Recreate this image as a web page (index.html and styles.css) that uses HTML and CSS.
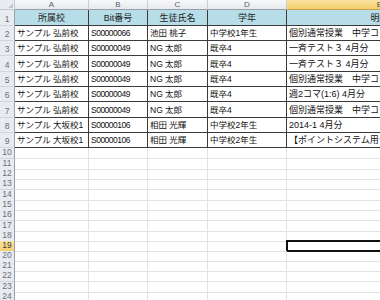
FILE: index.html
```html
<!DOCTYPE html>
<html lang="ja">
<head>
<meta charset="utf-8">
<link rel="stylesheet" href="styles.css">
</head>
<body>
<div class="sheet">
  <div class="row colhead">
    <div class="corner"><span class="tri"></span></div>
    <div class="ch">A</div><div class="ch">B</div><div class="ch">C</div><div class="ch">D</div><div class="ch sel">E</div>
  </div>
  <div class="row r1 h16">
    <div class="rh">1</div>
    <div class="c t hd">所属校</div><div class="c t hd">Bit番号</div><div class="c t hd">生徒氏名</div><div class="c t hd">学年</div><div class="c t hd">明細</div>
  </div>
  <div class="row h15">
    <div class="rh">2</div>
    <div class="c t">サンプル 弘前校</div><div class="c t num">S00000066</div><div class="c t">池田 桃子</div><div class="c t">中学校1年生</div><div class="c t e">個別通常授業　中学コース（週1回）4月分</div>
  </div>
  <div class="row h15">
    <div class="rh">3</div>
    <div class="c t">サンプル 弘前校</div><div class="c t num">S00000049</div><div class="c t">NG 太郎</div><div class="c t">既卒4</div><div class="c t e">一斉テスト３ 4月分</div>
  </div>
  <div class="row h16">
    <div class="rh">4</div>
    <div class="c t">サンプル 弘前校</div><div class="c t num">S00000049</div><div class="c t">NG 太郎</div><div class="c t">既卒4</div><div class="c t e">一斉テスト３ 4月分</div>
  </div>
  <div class="row h15">
    <div class="rh">5</div>
    <div class="c t">サンプル 弘前校</div><div class="c t num">S00000049</div><div class="c t">NG 太郎</div><div class="c t">既卒4</div><div class="c t e">個別通常授業　中学コース（週1回）4月分</div>
  </div>
  <div class="row h15">
    <div class="rh">6</div>
    <div class="c t">サンプル 弘前校</div><div class="c t num">S00000049</div><div class="c t">NG 太郎</div><div class="c t">既卒4</div><div class="c t e">週2コマ(1:6) 4月分</div>
  </div>
  <div class="row h16">
    <div class="rh">7</div>
    <div class="c t">サンプル 弘前校</div><div class="c t num">S00000049</div><div class="c t">NG 太郎</div><div class="c t">既卒4</div><div class="c t e">個別通常授業　中学コース（週1回）4月分</div>
  </div>
  <div class="row h15">
    <div class="rh">8</div>
    <div class="c t">サンプル 大坂校1</div><div class="c t num">S00000106</div><div class="c t">相田 光輝</div><div class="c t">中学校2年生</div><div class="c t e">2014-1 4月分</div>
  </div>
  <div class="row h15">
    <div class="rh">9</div>
    <div class="c t">サンプル 大坂校1</div><div class="c t num">S00000106</div><div class="c t">相田 光輝</div><div class="c t">中学校2年生</div><div class="c t e">【ポイントシステム用テスト】4月分</div>
  </div>
  <div class="row h11"><div class="rh">10</div><div class="c"></div><div class="c"></div><div class="c"></div><div class="c"></div><div class="c"></div></div>
  <div class="row h10"><div class="rh">11</div><div class="c"></div><div class="c"></div><div class="c"></div><div class="c"></div><div class="c"></div></div>
  <div class="row h10"><div class="rh">12</div><div class="c"></div><div class="c"></div><div class="c"></div><div class="c"></div><div class="c"></div></div>
  <div class="row h11"><div class="rh">13</div><div class="c"></div><div class="c"></div><div class="c"></div><div class="c"></div><div class="c"></div></div>
  <div class="row h10"><div class="rh">14</div><div class="c"></div><div class="c"></div><div class="c"></div><div class="c"></div><div class="c"></div></div>
  <div class="row h10"><div class="rh">15</div><div class="c"></div><div class="c"></div><div class="c"></div><div class="c"></div><div class="c"></div></div>
  <div class="row h11"><div class="rh">16</div><div class="c"></div><div class="c"></div><div class="c"></div><div class="c"></div><div class="c"></div></div>
  <div class="row h10"><div class="rh">17</div><div class="c"></div><div class="c"></div><div class="c"></div><div class="c"></div><div class="c"></div></div>
  <div class="row h10"><div class="rh">18</div><div class="c"></div><div class="c"></div><div class="c"></div><div class="c"></div><div class="c"></div></div>
  <div class="row h10"><div class="rh sel">19</div><div class="c"></div><div class="c"></div><div class="c"></div><div class="c"></div><div class="c active"></div></div>
  <div class="row h10"><div class="rh">20</div><div class="c"></div><div class="c"></div><div class="c"></div><div class="c"></div><div class="c"></div></div>
  <div class="row h10"><div class="rh">21</div><div class="c"></div><div class="c"></div><div class="c"></div><div class="c"></div><div class="c"></div></div>
  <div class="row h11"><div class="rh">22</div><div class="c"></div><div class="c"></div><div class="c"></div><div class="c"></div><div class="c"></div></div>
  <div class="row h10"><div class="rh">23</div><div class="c"></div><div class="c"></div><div class="c"></div><div class="c"></div><div class="c"></div></div>
  <div class="row h11"><div class="rh">24</div><div class="c"></div><div class="c"></div><div class="c"></div><div class="c"></div><div class="c"></div></div>
</div>
</body>
</html>
```

FILE: styles.css
```css
html, body {
  margin: 0;
  padding: 0;
  background: #ffffff;
  overflow: hidden;
}
.sheet {
  width: 380px;
  height: 300px;
  overflow: hidden;
  font-family: "Liberation Sans", "Noto Sans CJK JP", sans-serif;
  font-size: 8.5px;
  color: #111;
}
.row {
  display: grid;
  grid-template-columns: 15px 74px 59px 60px 79px 186px;
  width: 473px;
}
.colhead { height: 10px; }
.h16 { height: 16px; }
.h15 { height: 15px; }
.h11 { height: 11px; }
.h10 { height: 10px; }

.corner {
  box-sizing: border-box;
  background: #e9ecf0;
  border-right: 1px solid #c5c9cf;
  border-bottom: 1px solid #c5c9cf;
  position: relative;
}
.tri {
  position: absolute;
  right: 1px;
  bottom: 1px;
  width: 0;
  height: 0;
  border-left: 5px solid transparent;
  border-bottom: 5px solid #c3c7cc;
}
.ch {
  box-sizing: border-box;
  background: linear-gradient(#f7f8fa, #e6e9ed);
  border-right: 1px solid #c9cdd2;
  border-bottom: 1px solid #9aa0a8;
  color: #5b5f66;
  font-size: 8px;
  line-height: 9px;
  text-align: center;
}
.ch.sel {
  background: linear-gradient(#fbe3a0, #f6cf6e);
  border-bottom: 1px solid #c9a24a;
  color: #4a4a4a;
}
.rh {
  box-sizing: border-box;
  background: #e8ebef;
  border-right: 1px solid #9aa0a8;
  border-bottom: 1px solid #d2d6dc;
  color: #687080;
  font-size: 8.5px;
  display: flex;
  align-items: flex-end;
  justify-content: center;
  line-height: 9px;
  padding-bottom: 1px;
}
.rh.sel {
  background: linear-gradient(#fbe3a0, #f6cf6e);
  border-bottom: 1px solid #c9a24a;
  color: #3a3a3a;
}
.c {
  box-sizing: border-box;
  border-right: 1px solid #e1e3e6;
  border-bottom: 1px solid #e1e3e6;
  white-space: nowrap;
  overflow: visible;
  min-width: 0;
}
.c.t {
  border-right: 1px solid #3a3a3a;
  border-bottom: 1px solid #3a3a3a;
  padding: 0 2px;
  display: flex;
  align-items: flex-end;
  line-height: 12px;
  padding-bottom: 1px;
}
.c.t:last-child {
  overflow: hidden;
}
.c.e {
  font-size: 9px;
}
.c.hd {
  background: #b7dde8;
  justify-content: center;
  color: #222;
  font-size: 9px;
}
.num {
  letter-spacing: -0.5px;
}
.c.active {
  border: 2px solid #111;
  margin: -1px 0 0 -1px;
}
```
